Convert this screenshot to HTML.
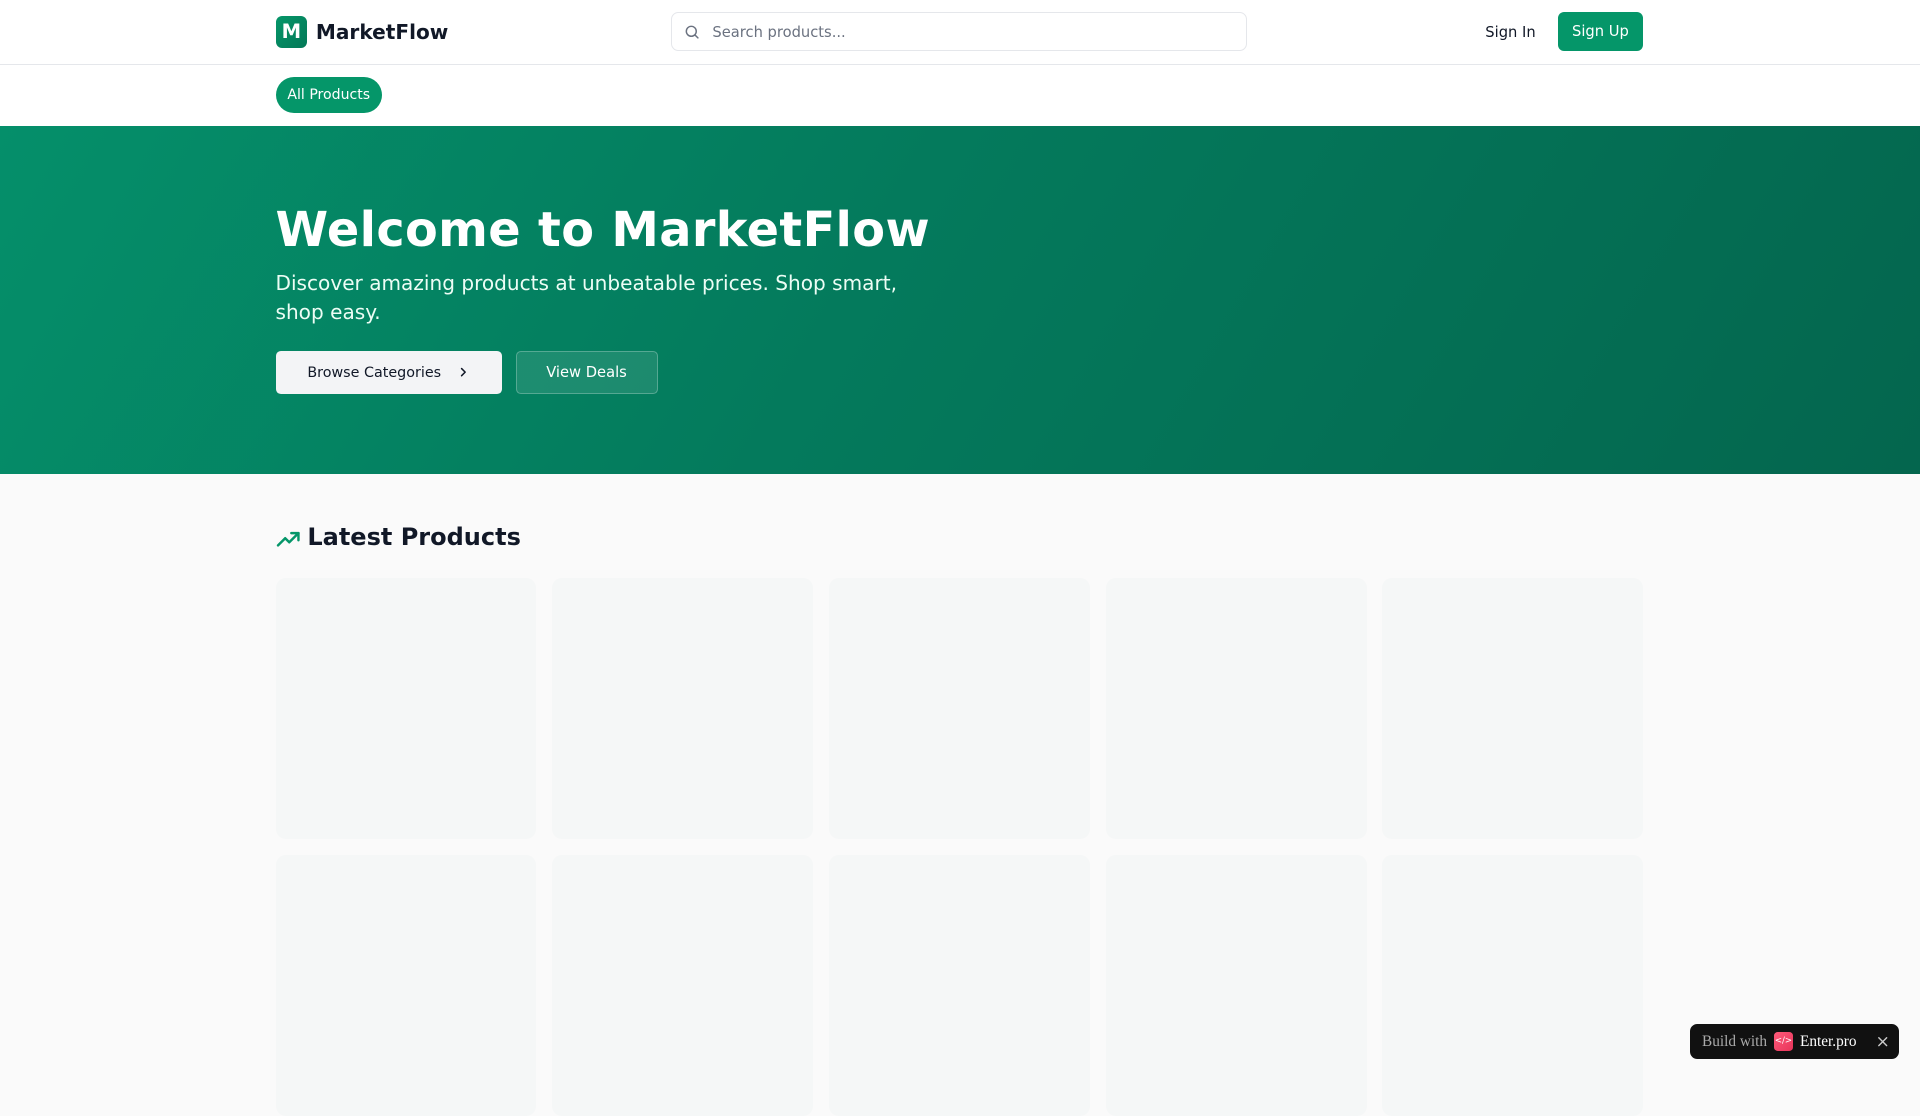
<!DOCTYPE html>
<html><head><meta charset="utf-8">
<style>
html{zoom:1.22449}
*{box-sizing:border-box;margin:0;padding:0}
body{width:1568px;height:882px;overflow:hidden;background:#fafafa;font-family:"DejaVu Sans","Liberation Sans",sans-serif;color:#111827;position:relative}
.hdr{height:53px;background:#fff;border-bottom:1px solid #e5e7eb;position:relative}
.logo{position:absolute;left:225px;top:13px;width:26px;height:26px;border-radius:5px;background:linear-gradient(135deg,#059669,#047857);color:#fff;font-weight:bold;font-size:16px;text-align:center;line-height:26px}
.brand{position:absolute;left:258px;top:16px;font-size:16.4px;font-weight:bold;color:#111827}
.search{position:absolute;left:548px;top:10px;width:470px;height:32px;border:1px solid #e5e7eb;border-radius:6px;background:#fff}
.search span{position:absolute;left:33px;top:9px;font-size:12px;color:#6b7280}
.search svg{position:absolute;left:10px;top:9px}
.signin{position:absolute;left:1213px;top:20px;font-size:12px;color:#111827}
.signup{position:absolute;left:1272px;top:10px;width:70px;height:32px;border-radius:5px;background:#059669;color:#fff;font-size:12px;text-align:center;line-height:33px}
.nav{height:50px;background:#fff;position:relative}
.pill{position:absolute;left:225px;top:10px;width:87px;height:29px;border-radius:15px;background:#059669;color:#fff;font-size:11.5px;text-align:center;line-height:31px}
.hero{height:284px;background:linear-gradient(120deg,#058f6a 0%,#047a5c 45%,#04664e 100%);position:relative;color:#fff}
.hero h1{position:absolute;left:225px;top:63px;font-size:39px;font-weight:bold;letter-spacing:0.3px}
.hero p{position:absolute;left:225px;top:117px;width:540px;font-size:16.4px;line-height:23px;color:#ecfdf5}
.b1{position:absolute;left:225px;top:184px;width:185px;height:35px;background:#f3f4f6;border-radius:4px;color:#111827;font-size:11.7px;line-height:37px;padding-left:26px}
.b1 svg{position:absolute;left:148px;top:12px}
.b2{position:absolute;left:421px;top:184px;width:116px;height:35px;border:1px solid rgba(255,255,255,.25);background:rgba(255,255,255,.1);border-radius:4px;font-size:12px;text-align:center;line-height:35px}
.lp{position:absolute;left:251px;top:427px;font-size:19.6px;font-weight:bold;color:#111827}
.ic{position:absolute;left:225px;top:430px}
.card{position:absolute;width:213px;height:213px;border-radius:8px;background:#f5f7f7}
.badge{position:absolute;left:1380px;top:836px;width:171px;height:29px;border-radius:6px;background:#111;font-family:"Liberation Serif",serif;font-size:12.5px;color:#aaa}
.badge .t1{position:absolute;left:10px;top:8px}
.badge .lg{position:absolute;left:69px;top:7px;width:15px;height:15px;border-radius:3px;background:linear-gradient(135deg,#ff5a7a,#e8345a);color:#fff;font-size:7px;text-align:center;line-height:15px;font-family:"DejaVu Sans",sans-serif}
.badge .t2{position:absolute;left:90px;top:8px;color:#fff}
.badge .x{position:absolute;left:152px;top:9px}
</style></head><body>
<div class="hdr">
<div class="logo">M</div><div class="brand">MarketFlow</div>
<div class="search"><svg width="13" height="13" viewBox="0 0 24 24" fill="none" stroke="#6b7280" stroke-width="2.2" stroke-linecap="round"><circle cx="11" cy="11" r="7.5"/><path d="M21 21l-4.3-4.3"/></svg><span>Search products...</span></div>
<div class="signin">Sign In</div><div class="signup">Sign Up</div>
</div>
<div class="nav"><div class="pill">All Products</div></div>
<div class="hero">
<h1>Welcome to MarketFlow</h1>
<p>Discover amazing products at unbeatable prices. Shop smart, shop easy.</p>
<div class="b1">Browse Categories<svg width="10" height="10" viewBox="0 0 24 24" fill="none" stroke="#111827" stroke-width="3" stroke-linecap="round" stroke-linejoin="round"><path d="M9 5l7 7-7 7"/></svg></div>
<div class="b2">View Deals</div>
</div>
<svg class="ic" width="20" height="20" viewBox="0 0 24 24" fill="none" stroke="#059669" stroke-width="2.4" stroke-linecap="round" stroke-linejoin="round"><path d="M2 18l7-7 4 4 9-9"/><path d="M15 6h7v7"/></svg>
<div class="lp">Latest Products</div>
<div class="card" style="left:225px;top:472px"></div>
<div class="card" style="left:451px;top:472px"></div>
<div class="card" style="left:677px;top:472px"></div>
<div class="card" style="left:903px;top:472px"></div>
<div class="card" style="left:1129px;top:472px"></div>
<div class="card" style="left:225px;top:698px"></div>
<div class="card" style="left:451px;top:698px"></div>
<div class="card" style="left:677px;top:698px"></div>
<div class="card" style="left:903px;top:698px"></div>
<div class="card" style="left:1129px;top:698px"></div>
<div class="badge"><span class="t1">Build with</span><span class="lg">&lt;/&gt;</span><span class="t2">Enter.pro</span><svg class="x" width="11" height="11" viewBox="0 0 24 24" fill="none" stroke="#ccc" stroke-width="2.5" stroke-linecap="round"><path d="M5 5l14 14M19 5L5 19"/></svg></div>
</body></html>
